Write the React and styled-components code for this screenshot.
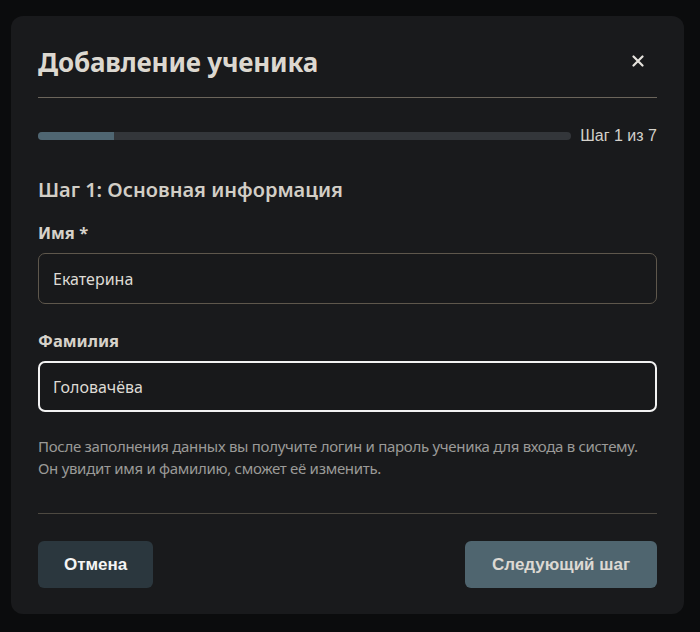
import React from 'react'
import styled, { createGlobalStyle } from 'styled-components'

const GlobalStyle = createGlobalStyle`
  html, body {
    margin: 0;
    padding: 0;
    background: #0b0c0d;
  }
  body {
    font-family: "Noto Sans", "Open Sans", sans-serif;
  }
`

const Backdrop = styled.div`
  width: 700px;
  height: 632px;
  box-sizing: border-box;
  padding: 16px 16px 18px 11px;
  display: flex;
`

const Modal = styled.div`
  flex: 1;
  background: #191a1c;
  border-radius: 12px;
  padding: 0 27px;
  display: flex;
  flex-direction: column;
`

const Header = styled.div`
  display: flex;
  align-items: center;
  justify-content: space-between;
  height: 81px;
  border-bottom: 1px solid #6b655b;
`

const Title = styled.h2`
  margin: 0;
  padding-top: 11px;
  font-family: "Noto Sans", sans-serif;
  font-weight: 700;
  font-size: 26px;
  line-height: 34px;
  color: #dcd8d0;
  letter-spacing: -0.2px;
`

const CloseButton = styled.button`
  border: none;
  background: transparent;
  padding: 0;
  margin: 8px 12px 0 0;
  width: 14px;
  height: 14px;
  display: flex;
  align-items: center;
  justify-content: center;
  cursor: pointer;
`

const ProgressRow = styled.div`
  display: flex;
  align-items: center;
  gap: 9px;
  height: 18px;
  margin-top: 29px;
`

const Track = styled.div`
  flex: 1;
  height: 8px;
  border-radius: 4px;
  background: #33363a;
  overflow: hidden;
`

const Fill = styled.div`
  height: 100%;
  background: #4f6672;
`

const StepCount = styled.span`
  font-family: "Liberation Sans", Arial, sans-serif;
  font-size: 16px;
  color: #d4d1cb;
`

const StepTitle = styled.h3`
  margin: 31px 0 0;
  font-family: "Noto Sans", sans-serif;
  font-weight: 600;
  font-size: 20px;
  line-height: 27px;
  color: #d2cec6;
`

const Field = styled.div`
  display: flex;
  flex-direction: column;
  margin-top: ${p => p.$top}px;
`

const Label = styled.label`
  font-family: "Noto Sans", sans-serif;
  font-weight: 700;
  font-size: 16.5px;
  line-height: 22px;
  color: #d6d2ca;
  margin-bottom: 9px;
`

const Input = styled.input`
  box-sizing: border-box;
  height: 51px;
  width: 100%;
  padding: 0 ${p => (p.$focused ? 13 : 14)}px;
  border-radius: 7px;
  background: #18191b;
  color: #dedbd5;
  font-family: "Noto Sans", sans-serif;
  font-size: 16px;
  outline: none;
  border: ${p => (p.$focused ? '2px solid #f2f2f2' : '1px solid #5e574c')};
`

const Help = styled.p`
  margin: 23px 0 0;
  font-family: "Noto Sans", sans-serif;
  font-size: 15px;
  line-height: 22px;
  color: #9b9a98;
  letter-spacing: -0.3px;
`

const Footer = styled.div`
  margin-top: 34px;
  border-top: 1px solid #4d4941;
  padding-top: 27px;
  display: flex;
  justify-content: space-between;
`

const Button = styled.button`
  height: 47px;
  padding: 0 ${p => (p.$primary ? 27 : 26)}px;
  border: none;
  border-radius: 6px;
  background: ${p => (p.$primary ? '#4f656f' : '#2b373e')};
  color: ${p => (p.$primary ? '#dcd9d3' : '#f4f4f4')};
  font-family: "Liberation Sans", Arial, sans-serif;
  font-weight: 700;
  font-size: 17px;
  cursor: pointer;
`

export default function App() {
  const step = 1
  const total = 7
  return (
    <>
      <GlobalStyle />
      <Backdrop>
        <Modal>
          <Header>
            <Title>Добавление ученика</Title>
            <CloseButton aria-label="Закрыть">
              <svg width="12" height="12" viewBox="0 0 12 12">
                <path d="M1.5 1.5 L10.5 10.5 M10.5 1.5 L1.5 10.5" stroke="#e6e3dd" strokeWidth="2.2" strokeLinecap="round" />
              </svg>
            </CloseButton>
          </Header>
          <ProgressRow>
            <Track>
              <Fill style={{ width: `${(step / total) * 100}%` }} />
            </Track>
            <StepCount>Шаг {step} из {total}</StepCount>
          </ProgressRow>
          <StepTitle>Шаг 1: Основная информация</StepTitle>
          <Field $top={19}>
            <Label>Имя *</Label>
            <Input defaultValue="Екатерина" />
          </Field>
          <Field $top={26}>
            <Label>Фамилия</Label>
            <Input $focused defaultValue="Головачёва" />
          </Field>
          <Help>
            После заполнения данных вы получите логин и пароль ученика для входа в систему.
            <br />
            Он увидит имя и фамилию, сможет её изменить.
          </Help>
          <Footer>
            <Button>Отмена</Button>
            <Button $primary>Следующий шаг</Button>
          </Footer>
        </Modal>
      </Backdrop>
    </>
  )
}
